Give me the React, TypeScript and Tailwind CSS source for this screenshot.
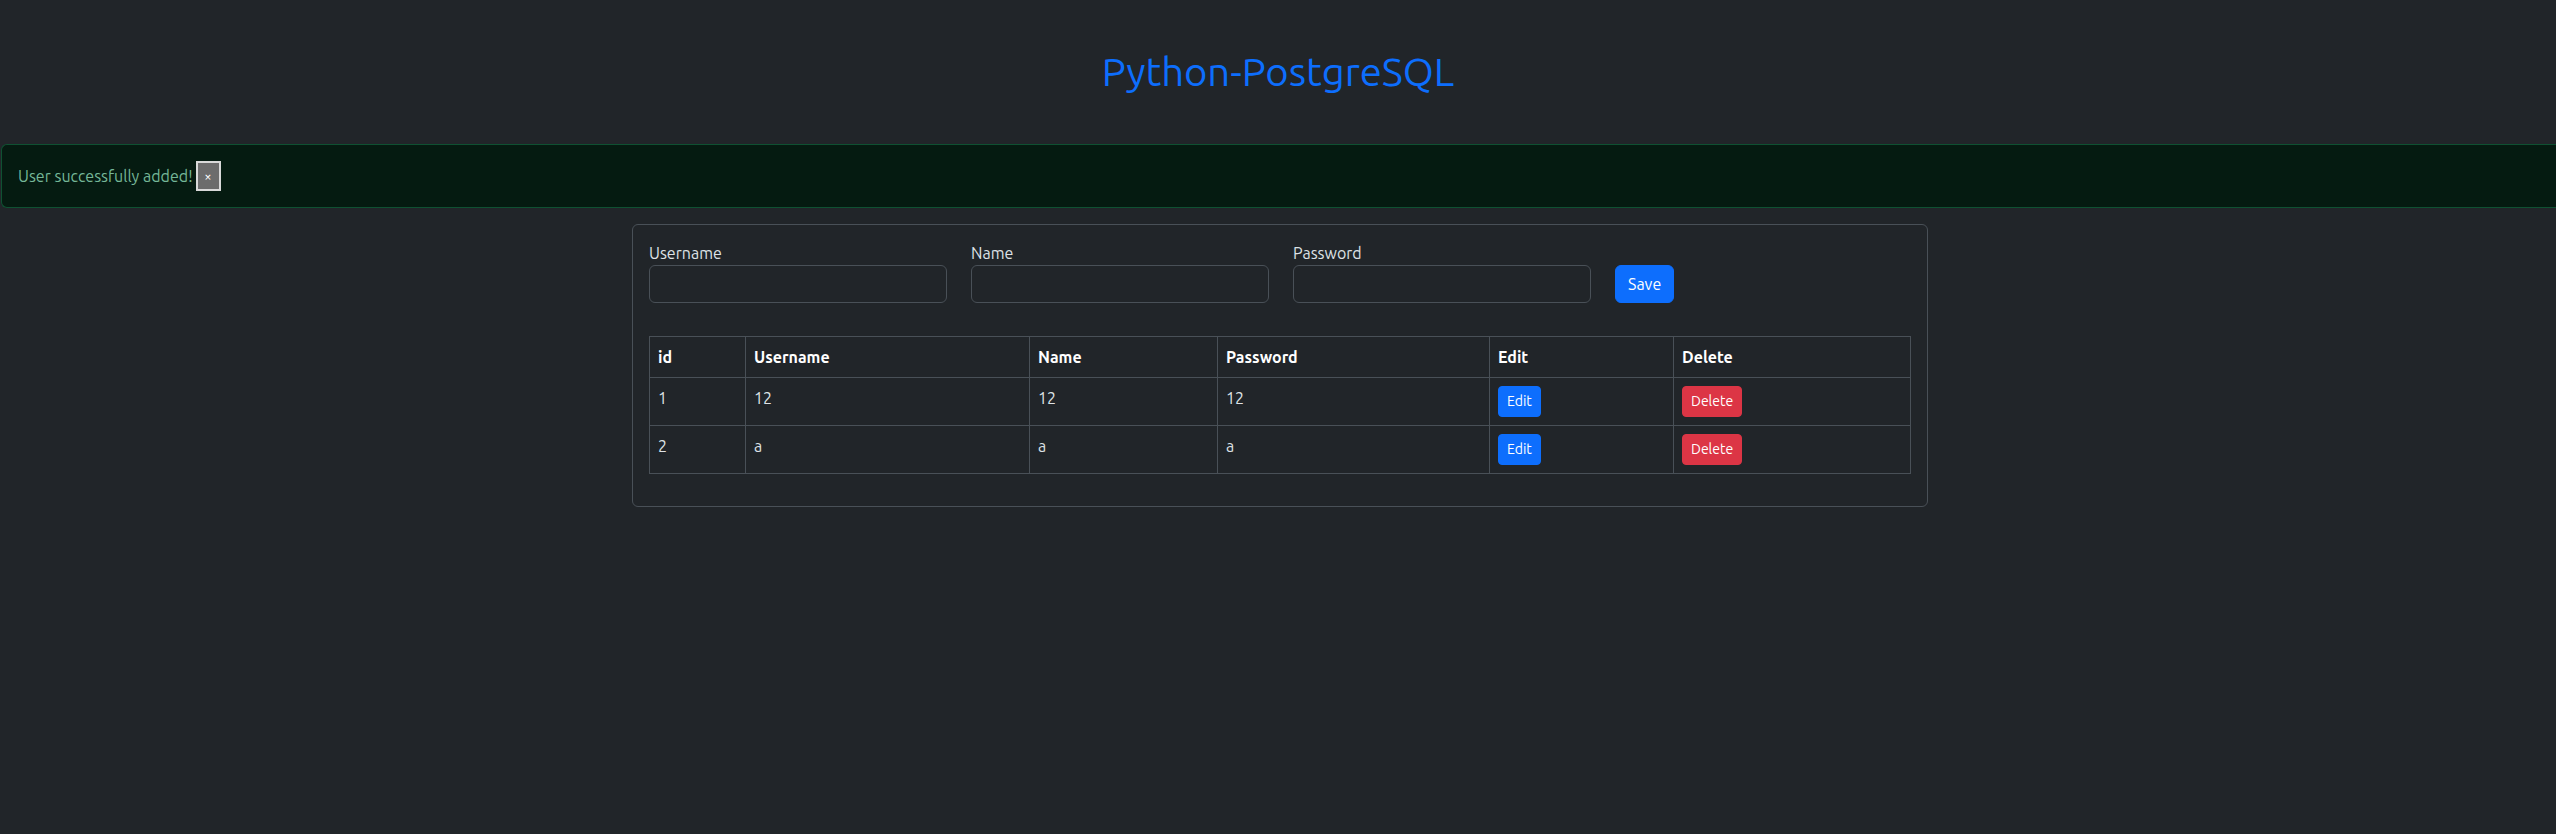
import React from "react";

const users = [
  { id: 1, username: "12", name: "12", password: "12" },
  { id: 2, username: "a", name: "a", password: "a" },
];

function Field(props: { label: string; type?: string }) {
  return (
    <div className="flex flex-col w-[298px]">
      <label className="text-[16px] leading-6 text-[#dee2e6]">{props.label}</label>
      <input
        type={props.type ?? "text"}
        className="h-[38px] w-full rounded-[6px] border border-[#495057] bg-[#212529] px-3 text-[#dee2e6] outline-none"
      />
    </div>
  );
}

export default function App() {
  const th = "border border-[#495057] px-2 py-2 text-left align-top font-bold text-white leading-6";
  const td = "border border-[#495057] px-2 py-2 text-left align-top text-[#dee2e6] leading-6";

  return (
    <div className="min-h-[834px] w-full overflow-hidden bg-[#212529] font-['Ubuntu','Noto_Sans',sans-serif] text-[16px] text-[#dee2e6]">
      <h1 className="pt-[48px] pb-[48px] text-center text-[40px] leading-[48px] text-[#0d6efd]">
        Python-PostgreSQL
      </h1>

      <div className="ml-px flex items-center rounded-l-[6px] border border-r-0 border-[#0f5132] bg-[#051b11] px-4 py-4 text-[#75b798]">
        <span className="leading-6">User successfully added!</span>
        <button className="ml-[3px] flex h-[30px] w-[25px] items-center justify-center border-2 border-[#d9d9d9] bg-[#6c6c6c] text-[13px] leading-none text-white">
          ×
        </button>
      </div>

      <div className="flex justify-center pl-1 pt-4">
        <div className="w-[1296px] rounded-[6px] border border-[#495057] p-4">
          <div className="flex items-end gap-6">
            <Field label="Username" />
            <Field label="Name" />
            <Field label="Password" type="password" />
            <button className="h-[38px] rounded-[6px] border border-[#0d6efd] bg-[#0d6efd] px-3 text-[16px] text-white">
              Save
            </button>
          </div>

          <table className="mt-[33px] mb-4 w-full table-fixed border-collapse text-[16px]">
            <thead>
              <tr>
                <th className={`${th} w-[96px]`}>id</th>
                <th className={`${th} w-[284px]`}>Username</th>
                <th className={`${th} w-[188px]`}>Name</th>
                <th className={`${th} w-[272px]`}>Password</th>
                <th className={`${th} w-[184px]`}>Edit</th>
                <th className={th}>Delete</th>
              </tr>
            </thead>
            <tbody>
              {users.map((u) => (
                <tr key={u.id}>
                  <td className={td}>{u.id}</td>
                  <td className={td}>{u.username}</td>
                  <td className={td}>{u.name}</td>
                  <td className={td}>{u.password}</td>
                  <td className={td}>
                    <button className="h-[31px] rounded-[4px] border border-[#0d6efd] bg-[#0d6efd] px-2 text-[14px] leading-[21px] text-white">
                      Edit
                    </button>
                  </td>
                  <td className={td}>
                    <button className="h-[31px] rounded-[4px] border border-[#dc3545] bg-[#dc3545] px-2 text-[14px] leading-[21px] text-white">
                      Delete
                    </button>
                  </td>
                </tr>
              ))}
            </tbody>
          </table>
        </div>
      </div>
    </div>
  );
}
